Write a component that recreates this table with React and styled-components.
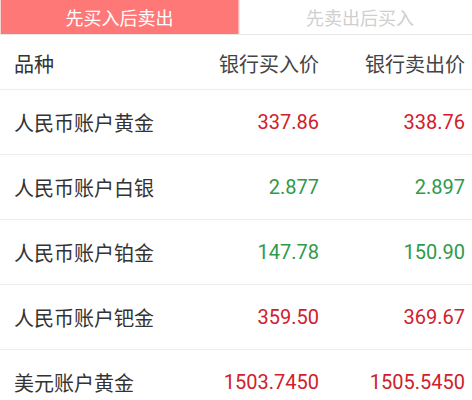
import React, { useState } from "react";
import styled, { createGlobalStyle } from "styled-components";

const GlobalStyle = createGlobalStyle`
  html, body {
    margin: 0;
    padding: 0;
    background: #fff;
  }
  body {
    font-family: Roboto, "Noto Sans CJK SC", sans-serif;
  }
`;

const Page = styled.div`
  width: 472px;
  height: 400px;
  overflow: hidden;
  background: #fff;
`;

const TabBar = styled.div`
  display: grid;
  grid-template-columns: 240px 1fr;
  height: 34px;
  border-bottom: 1px solid #e6e6e6;
`;

const Tab = styled.button`
  border: none;
  margin: 0;
  padding: 0 0 0 ${(p) => (p.$active ? 0 : 8)}px;
  font-family: "Noto Sans CJK SC", sans-serif;
  font-size: 18px;
  line-height: 34px;
  cursor: pointer;
  background: ${(p) => (p.$active ? "#ff7878" : "#fff")};
  color: ${(p) => (p.$active ? "#fff" : "#cfcfcf")};
  box-shadow: ${(p) =>
    p.$active ? "inset 1px 0 0 #f2d6d6, inset -1px 0 0 #ffb2b2" : "none"};
  border-right: ${(p) => (p.$active ? "1px solid #ececec" : "none")};
`;

const Row = styled.div`
  display: grid;
  grid-template-columns: 1fr 146px 146px;
  align-items: center;
  height: ${(p) => (p.$head ? 55 : 65)}px;
  padding: ${(p) => (p.$head ? "3px 7px 0 14px" : "0 7px 0 14px")};
  box-sizing: border-box;
  border-bottom: 1px solid #ececec;
`;

const Name = styled.div`
  font-family: "Noto Sans CJK SC", sans-serif;
  font-size: 20px;
  color: #333;
`;

const HeadCell = styled.div`
  font-family: "Noto Sans CJK SC", sans-serif;
  font-size: 20px;
  color: #444;
  text-align: right;
`;

const Price = styled.div`
  font-family: Roboto, sans-serif;
  font-size: 20px;
  text-align: right;
  color: ${(p) => (p.$up ? "#d1202b" : "#2f9a4b")};
`;

const rows = [
  { name: "人民币账户黄金", buy: "337.86", sell: "338.76", up: true },
  { name: "人民币账户白银", buy: "2.877", sell: "2.897", up: false },
  { name: "人民币账户铂金", buy: "147.78", sell: "150.90", up: false },
  { name: "人民币账户钯金", buy: "359.50", sell: "369.67", up: true },
  { name: "美元账户黄金", buy: "1503.7450", sell: "1505.5450", up: true },
];

export default function App() {
  const [tab, setTab] = useState(0);

  return (
    <>
      <GlobalStyle />
      <Page>
        <TabBar>
          <Tab $active={tab === 0} onClick={() => setTab(0)}>
            先买入后卖出
          </Tab>
          <Tab $active={tab === 1} onClick={() => setTab(1)}>
            先卖出后买入
          </Tab>
        </TabBar>
        <Row $head>
          <Name>品种</Name>
          <HeadCell>银行买入价</HeadCell>
          <HeadCell>银行卖出价</HeadCell>
        </Row>
        {rows.map((r) => (
          <Row key={r.name}>
            <Name>{r.name}</Name>
            <Price $up={r.up}>{r.buy}</Price>
            <Price $up={r.up}>{r.sell}</Price>
          </Row>
        ))}
      </Page>
    </>
  );
}
